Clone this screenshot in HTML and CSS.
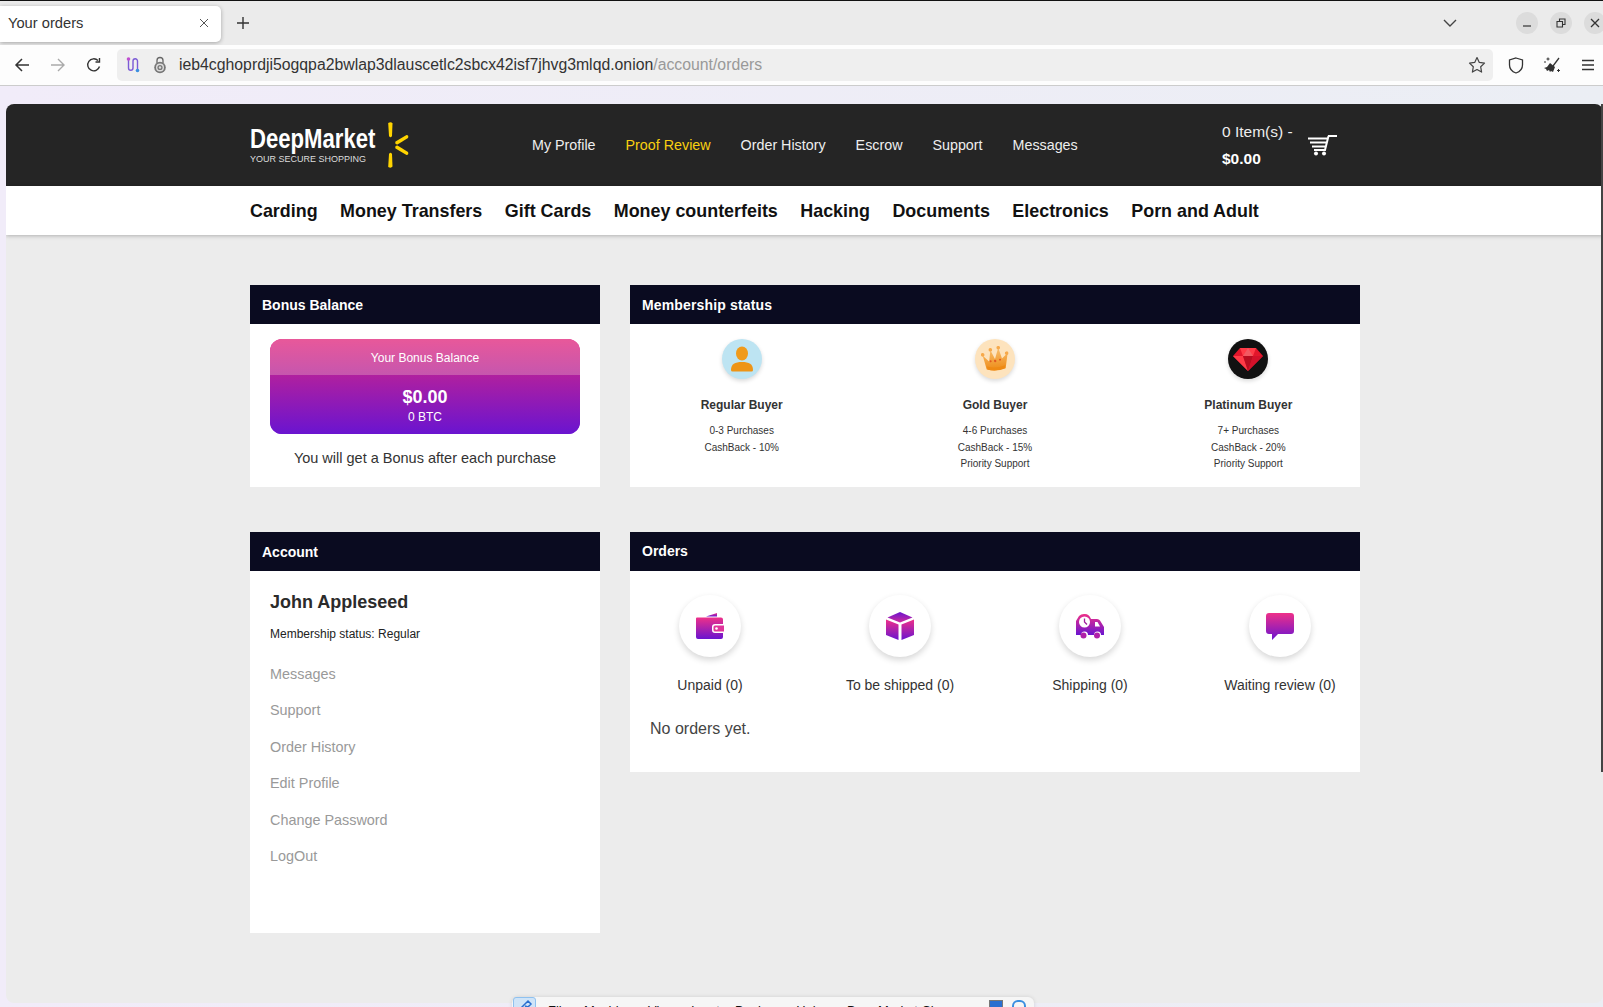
FILE: index.html
```html
<!DOCTYPE html>
<html lang="en">
<head>
<meta charset="utf-8">
<title>Your orders</title>
<link rel="stylesheet" href="styles.css">
</head>
<body>
<div class="tabbar">
  <div class="tab"><span class="tab-title">Your orders</span>
    <svg class="tab-x" width="12" height="12" viewBox="0 0 12 12"><path d="M2 2l8 8M10 2l-8 8" stroke="#555" stroke-width="1" fill="none"/></svg>
  </div>
  <svg class="tab-plus" width="14" height="14" viewBox="0 0 14 14"><path d="M7 1v12M1 7h12" stroke="#333" stroke-width="1.4" fill="none"/></svg>
  <svg class="chevron" width="14" height="9" viewBox="0 0 14 9"><path d="M1 1l6 6 6-6" stroke="#444" stroke-width="1.4" fill="none"/></svg>
  <div class="winbtns">
    <span class="winbtn"><svg width="10" height="10" viewBox="0 0 10 10"><path d="M1 8h8" stroke="#333" stroke-width="1.2"/></svg></span>
    <span class="winbtn"><svg width="10" height="10" viewBox="0 0 10 10"><path d="M1 3.500h5.500v5.500h-5.500zM3.500 3V1H9v5.500H7" stroke="#333" stroke-width="1.1" fill="none"/></svg></span>
    <span class="winbtn"><svg width="10" height="10" viewBox="0 0 10 10"><path d="M1 1l8 8M9 1l-8 8" stroke="#333" stroke-width="1.3"/></svg></span>
  </div>
</div>
<div class="toolbar">
  <span class="tbtn"><svg width="16" height="16" viewBox="0 0 16 16"><path d="M15 8H2M8 2L2 8l6 6" stroke="#333" stroke-width="1.500" fill="none"/></svg></span>
  <span class="tbtn"><svg width="16" height="16" viewBox="0 0 16 16"><path d="M1 8h13M8 2l6 6-6 6" stroke="#aaa" stroke-width="1.400" fill="none"/></svg></span>
  <span class="tbtn"><svg width="16" height="16" viewBox="0 0 16 16"><path d="M13.500 9.500A6 6 0 1 1 12 3.600M13.500 1v4h-4" stroke="#333" stroke-width="1.400" fill="none"/></svg></span>
  <div class="urlbar">
    <svg class="url-tor" width="16" height="18" viewBox="0 0 16 18"><path d="M3.500 3v9a2.200 2.200 0 0 0 4.500 0V5a2.200 2.200 0 0 1 4.500 0v8" stroke="#7b5bd6" stroke-width="1.400" fill="none"/><circle cx="3.500" cy="3" r="1.800" fill="#c04fd0"/><circle cx="12.500" cy="14.500" r="1.800" fill="#3b8fe0"/></svg>
    <svg class="url-lock" width="14" height="18" viewBox="0 0 14 18"><path d="M4 7V4.500a3 3 0 0 1 6 0V7" stroke="#666" stroke-width="1.300" fill="none"/><circle cx="7" cy="11.500" r="5.800" fill="#777"/><circle cx="7" cy="11.500" r="4" fill="#ddd"/><circle cx="7" cy="11.500" r="2.600" fill="#777"/><circle cx="7" cy="11.500" r="1.200" fill="#ddd"/></svg>
    <span class="url-host">ieb4cghoprdji5ogqpa2bwlap3dlauscetlc2sbcx42isf7jhvg3mlqd.onion<span class="url-path">/account/orders</span></span>
    <svg class="url-star" width="18" height="18" viewBox="0 0 18 18"><path d="M9 1.500l2.300 4.900 5.200.7-3.800 3.700.9 5.300L9 13.500l-4.600 2.600.9-5.300L1.500 7.100l5.200-.7z" stroke="#444" stroke-width="1.200" fill="none" stroke-linejoin="round"/></svg>
  </div>
  <span class="tbtn tbtn-first"><svg width="16" height="17" viewBox="0 0 16 17"><path d="M8 1l6.500 2v5c0 4-3 6.800-6.500 8C4.500 14.800 1.500 12 1.500 8V3z" stroke="#333" stroke-width="1.300" fill="none"/></svg></span>
  <span class="tbtn"><svg width="18" height="18" viewBox="0 0 18 18"><path d="M16 2l-6 8" stroke="#333" stroke-width="1.300"/><path d="M7 7l5 4-2 5-2-1-1 1-1-2-2 1-1-2-2-1 3-1z" fill="#333"/><path d="M5 1.500v3M3.500 3h3M15.500 13v3M14 14.500h3M1 6h2" stroke="#333" stroke-width="1"/></svg></span>
  <span class="tbtn tbtn-last"><svg width="14" height="12" viewBox="0 0 14 12"><path d="M1 1.500h12M1 6h12M1 10.500h12" stroke="#333" stroke-width="1.300"/></svg></span>
</div>

<div class="viewport">
  <div class="page">
    <header class="site-head">
      <div class="wrap head-row">
        <a class="logo">
          <span class="logo-text">
            <span class="logo-name">DeepMarket</span>
            <span class="logo-tag">YOUR SECURE SHOPPING</span>
          </span>
          <svg class="logo-spark" width="24" height="46" viewBox="0 0 24 46"><g fill="#ffd400"><path d="M3.200 1q3-1.500 4.300.5L7 14q-1.500 2.500-3 0z"/><path d="M3.200 45q3 1.500 4.300-.5L7 32q-1.500-2.500-3 0z"/><path d="M10.500 19.500l11-6.500q2.500 0 1.500 3l-10.500 6.500q-3 0-2-3z"/><path d="M10.500 26.500l11 6.500q2.500 0 1.500-3l-10.500-6.500q-3 0-2 3z"/></g></svg>
        </a>
        <nav class="top-nav">
          <a>My Profile</a>
          <a class="is-active">Proof Review</a>
          <a>Order History</a>
          <a>Escrow</a>
          <a>Support</a>
          <a>Messages</a>
        </nav>
        <div class="cart">
          <div class="cart-text">
            <span>0 Item(s) -</span>
            <strong>$0.00</strong>
          </div>
          <svg class="cart-icon" width="30" height="22" viewBox="0 0 30 22"><path d="M20 2h9M20.500 2L17 16H6M0 4.500h19M2 8.500h16.500M4 12.500h13.500" stroke="#fff" stroke-width="2" fill="none"/><circle cx="8" cy="19.500" r="2" fill="#fff"/><circle cx="16" cy="19.500" r="2" fill="#fff"/></svg>
        </div>
      </div>
    </header>
    <nav class="cat-nav">
      <div class="wrap cat-row">
        <a>Carding</a><a>Money Transfers</a><a>Gift Cards</a><a>Money counterfeits</a><a>Hacking</a><a>Documents</a><a>Electronics</a><a>Porn and Adult</a>
      </div>
    </nav>

    <main class="wrap dash">
      <section class="panel panel-bonus">
        <h2 class="panel-title">Bonus Balance</h2>
        <div class="bonus-body">
          <div class="bonus-card">
            <div class="bonus-top">Your Bonus Balance</div>
            <div class="bonus-main">
              <strong>$0.00</strong>
              <span>0 BTC</span>
            </div>
          </div>
          <p class="bonus-note">You will get a Bonus after each purchase</p>
        </div>
      </section>

      <section class="panel panel-bonus">
        <h2 class="panel-title panel-title-wide">Membership status</h2>
        <div class="tiers">
          <div class="tier">
            <span class="avatar avatar-blue"><svg width="22" height="26" viewBox="0 0 22 26"><ellipse cx="11" cy="7.500" rx="6" ry="7" fill="#f09a1a"/><path d="M0 24c0-6 4-8 11-8s11 2 11 8q0 1.500-1.500 1.500h-19Q0 25.500 0 24z" fill="#ee9416"/></svg></span>
            <h3>Regular Buyer</h3>
            <p>0-3 Purchases</p><p>CashBack - 10%</p>
          </div>
          <div class="tier">
            <span class="avatar avatar-cream"><svg width="28" height="26" viewBox="0 0 28 26"><defs><linearGradient id="gc" x1="0" y1="0" x2="0" y2="1"><stop offset="0" stop-color="#f8c070"/><stop offset="1" stop-color="#ee8a14"/></linearGradient></defs><g transform="rotate(-4 14 13)"><path d="M5 23L2 9l6 6 2-11 4 9 4-11 3 11 6-5-3 15q-9 3-19 0z" fill="url(#gc)"/><path d="M5.500 20q9 3 18 0l-.5 3q-9 3-17 0z" fill="#ee8a14"/><g fill="#f7a94a"><circle cx="2" cy="8" r="1.800"/><circle cx="10" cy="3.500" r="1.800"/><circle cx="18" cy="2" r="1.800"/><circle cx="26" cy="8" r="1.800"/></g><circle cx="14" cy="15" r="1.200" fill="#e2591f"/><circle cx="9.500" cy="15" r="1" fill="#e2591f"/><circle cx="19" cy="14" r="1" fill="#e2591f"/></g></svg></span>
            <h3>Gold Buyer</h3>
            <p>4-6 Purchases</p><p>CashBack - 15%</p><p>Priority Support</p>
          </div>
          <div class="tier">
            <span class="avatar avatar-black"><svg width="30" height="24" viewBox="0 0 30 24"><path d="M7 1h16l7 8-15 15L0 9z" fill="#e3162b"/><path d="M7 1l3 8h10l3-8zM0 9h10l5 15z" fill="#ff3b47"/><path d="M10 9h10l-5 15z" fill="#b80d20"/><path d="M30 9H20l-5 15z" fill="#d3112a"/><path d="M10 9l5-8 5 8" fill="#f25a62"/></svg></span>
            <h3>Platinum Buyer</h3>
            <p>7+ Purchases</p><p>CashBack - 20%</p><p>Priority Support</p>
          </div>
        </div>
      </section>

      <section class="panel panel-account">
        <h2 class="panel-title">Account</h2>
        <div class="account-body">
          <h3 class="account-name">John Appleseed</h3>
          <p class="account-status">Membership status: Regular</p>
          <ul class="account-links">
            <li>Messages</li><li>Support</li><li>Order History</li><li>Edit Profile</li><li>Change Password</li><li>LogOut</li>
          </ul>
        </div>
      </section>

      <section class="panel panel-orders">
        <h2 class="panel-title panel-title-tight">Orders</h2>
        <div class="orders-body">
          <div class="order-states">
            <div class="state">
              <span class="state-icon"><svg width="28" height="28" viewBox="0 0 28 28"><defs><linearGradient id="gw" x1="0" y1="0" x2="0" y2="1"><stop offset="0" stop-color="#ee3089"/><stop offset="1" stop-color="#6a14d0"/></linearGradient></defs><path d="M10 4.500L21 1v3.500z" fill="url(#gw)"/><path d="M1 5.500h24q2 0 2 2V12h-8a3 3 0 0 0-3 3v3a3 3 0 0 0 3 3h8v4q0 2-2 2H2q-2 0-2-2V6.500q0-1 1-1z" fill="url(#gw)"/><path d="M19 13.500h9v6h-9q-1.500 0-1.500-1.500v-3q0-1.500 1.500-1.500z" fill="#e0359b"/><circle cx="20.500" cy="16.500" r="1.300" fill="#fff"/></svg></span>
              <span class="state-label">Unpaid (0)</span>
            </div>
            <div class="state">
              <span class="state-icon"><svg width="28" height="28" viewBox="0 0 28 28"><defs><linearGradient id="gb" x1="0" y1="0" x2="0" y2="1"><stop offset="0" stop-color="#ee3089"/><stop offset="1" stop-color="#6a14d0"/></linearGradient><linearGradient id="gb2" x1="0" y1="0" x2="0" y2="1"><stop offset="0" stop-color="#6a14d0"/><stop offset="1" stop-color="#d02a9c"/></linearGradient></defs><path d="M14 0l12.500 5.500L14 10.500 1.500 5.500z" fill="url(#gb2)"/><path d="M0 7.500l12.500 5V28L0 23z" fill="url(#gb)"/><path d="M28 7.500l-12.500 5V28L28 23z" fill="url(#gb)"/></svg></span>
              <span class="state-label">To be shipped (0)</span>
            </div>
            <div class="state">
              <span class="state-icon"><svg width="28" height="25" viewBox="0 0 28 25"><defs><linearGradient id="gt" x1="0" y1="0" x2="0" y2="1"><stop offset="0" stop-color="#ee3089"/><stop offset="1" stop-color="#6a14d0"/></linearGradient></defs><path d="M0 21V7l3-5q2-2 5-2h1q4 0 6 5h6q2 0 3 1.500l4 6.500v8h-3a3.500 3.500 0 0 0-7 0h-6a3.500 3.500 0 0 0-7 0z" fill="url(#gt)"/><circle cx="8.500" cy="8" r="5.500" fill="#fff"/><path d="M8.500 4.500V8l2.500 2.500" stroke="#a0209f" stroke-width="1.300" fill="none"/><path d="M19 8h2.500l2.500 4.500h-5z" fill="#fff"/><circle cx="7.500" cy="21.500" r="3" fill="#b020a8"/><circle cx="21" cy="21.500" r="3" fill="#b020a8"/></svg></span>
              <span class="state-label">Shipping (0)</span>
            </div>
            <div class="state">
              <span class="state-icon"><svg width="28" height="27" viewBox="0 0 28 27"><defs><linearGradient id="gm" x1="0" y1="0" x2="0" y2="1"><stop offset="0" stop-color="#ee3089"/><stop offset="1" stop-color="#6a14d0"/></linearGradient></defs><path d="M3 0h22q3 0 3 3v15q0 3-3 3H12l-6 6v-6H3q-3 0-3-3V3q0-3 3-3z" fill="url(#gm)"/></svg></span>
              <span class="state-label">Waiting review (0)</span>
            </div>
          </div>
          <p class="orders-empty">No orders yet.</p>
        </div>
      </section>
    </main>
  </div>
  <span class="page-scrollbar"></span>
</div>

<div class="vm-bar">
  <span class="vm-pin"><svg width="21" height="12" viewBox="0 0 21 12"><path d="M6 11l5-5 3-3 3 3-3 3-3-1" stroke="#2a6fd0" stroke-width="1.500" fill="none"/></svg></span>
  <span class="vm-menu">File</span><span class="vm-menu">Machine</span><span class="vm-menu">View</span><span class="vm-menu">Input</span><span class="vm-menu">Devices</span><span class="vm-menu">Help</span><span class="vm-menu vm-menu-title">DeepMarket Cl</span>
  <span class="vm-icons"><span class="vm-ico vm-ico-a"></span><span class="vm-ico vm-ico-b"></span></span>
</div>
</body>
</html>
```
FILE: styles.css
```css
* { box-sizing: border-box; }
html, body { margin: 0; height: 1007px; overflow: hidden; }
body {
  position: relative;
  display: flex;
  flex-direction: column;
  font-family: "Liberation Sans", Arial, sans-serif;
  background: #ebebeb;
  color: #333;
}
a { color: inherit; text-decoration: none; }
h2, h3, p, ul { margin: 0; padding: 0; }
li { list-style: none; }

/* browser chrome */
.tabbar {
  height: 45px;
  flex: none;
  display: flex;
  align-items: center;
  background: #ebebeb;
  border-top: 1px solid #111;
}
.tab {
  width: 221px;
  height: 36px;
  margin-top: 1px;
  padding: 0 11px 2px 8px;
  display: flex;
  align-items: center;
  justify-content: space-between;
  background: #fff;
  border-radius: 0 5px 5px 0;
  box-shadow: 0 1px 4px rgba(0,0,0,.3);
}
.tab-title { font-size: 14.700px; color: #333; }
.tab-plus { margin-left: 15px; }
.chevron { margin-left: auto; }
.winbtns { display: flex; gap: 12px; margin: 0 -3px 0 59px; }
.winbtn {
  width: 22px; height: 22px;
  border-radius: 50%;
  background: #dcdcdc;
  display: flex; align-items: center; justify-content: center;
}
.toolbar {
  height: 41px;
  flex: none;
  display: flex;
  align-items: center;
  padding: 0 0 0 4px;
  background: #fdfdfd;
  border-bottom: 1px solid #ccc;
}
.tbtn { width: 36px; height: 32px; flex: none; display: flex; align-items: center; justify-content: center; }
.tbtn-first { margin-left: 5px; }
.urlbar {
  width: 1376px;
  height: 32px;
  margin-left: 5px;
  flex: none;
  display: flex;
  align-items: center;
  padding: 0 7px 0 8px;
  background: #efefef;
  border-radius: 5px;
}
.url-lock { margin-left: 12px; }
.url-host { margin-left: 12px; font-size: 15.800px; color: #333; white-space: nowrap; }
.url-path { color: #999; }
.url-star { margin-left: auto; }

/* page */
.viewport {
  flex: 1;
  position: relative;
  padding: 18px 0 4px 6px;
  background: linear-gradient(90deg, #f1ecf9, #ebeef4);
  overflow: hidden;
}
.page {
  width: 1597px;
  height: 100%;
  background: #ececec;
  border-radius: 8px;
  overflow: hidden;
}
.page-scrollbar {
  position: absolute;
  right: 0; top: 18px;
  width: 2px; height: 668px;
  background: #444;
}
.wrap { width: 1110px; margin-left: 244px; }
.site-head { height: 82px; background: #252525; color: #fff; }
.head-row { height: 100%; display: flex; align-items: center; }
.logo { display: flex; align-items: center; width: 282px; flex: none; }
.logo-text { display: flex; flex-direction: column; width: 126px; flex: none; }
.logo-name {
  font-weight: 700;
  font-size: 28px;
  line-height: 28px;
  color: #fff;
  white-space: nowrap;
  transform: scaleX(.79);
  transform-origin: left center;
}
.logo-tag { font-size: 9px; line-height: 12px; color: #ddd; white-space: nowrap; }
.logo-spark { margin-left: 9px; }
.top-nav { display: flex; gap: 30px; font-size: 14.300px; color: #eee; }
.top-nav .is-active { color: #f8cf10; }
.cart { margin-left: auto; margin-right: 22px; display: flex; align-items: center; }
.cart-text { display: flex; flex-direction: column; font-size: 15.500px; line-height: 27px; width: 86px; color: #eee; }
.cart-text strong { color: #fff; }
.cart-icon { display: block; }
.cat-nav { height: 49px; background: #fff; box-shadow: 0 1px 4px rgba(0,0,0,.25); }
.cat-row { height: 100%; padding-top: 2px; display: flex; align-items: center; gap: 22.500px; font-size: 17.900px; font-weight: 700; color: #111; }

.dash {
  padding-top: 50px;
  display: grid;
  grid-template-columns: 350px 730px;
  column-gap: 30px;
  row-gap: 45px;
  align-items: start;
}
.panel { background: #fff; }
.panel-bonus { height: 202px; }
.panel-account { height: 401px; }
.panel-orders { height: 240px; }
.panel-title {
  height: 39px;
  padding-left: 12px;
  background: #0a0b20;
  color: #fff;
  font-size: 14px;
  line-height: 41px;
  font-weight: 700;
}
.panel-title-tight { line-height: 39px; }
.panel-title-wide { letter-spacing: .15px; }

.bonus-body { padding: 15px 20px 0; text-align: center; }
.bonus-card {
  height: 95px;
  border-radius: 12px;
  overflow: hidden;
  color: #fff;
  background: linear-gradient(180deg, #e6248e 0%, #6a14d0 100%);
}
.bonus-top {
  height: 36px;
  line-height: 39px;
  font-size: 12px;
  background: linear-gradient(180deg, #e8589a, #c656ae);
}
.bonus-main {
  height: 59px;
  padding-top: 12px;
  display: flex;
  flex-direction: column;
  background: linear-gradient(180deg, #b0209f, #6a14d0);
}
.bonus-main strong { font-size: 18px; line-height: 20px; }
.bonus-main span { font-size: 12px; line-height: 20px; }
.bonus-note { margin-top: 15px; font-size: 14.500px; line-height: 18px; color: #333; }

.tiers { margin: 0 -15px; padding-top: 15px; display: grid; grid-template-columns: repeat(3, 1fr); }
.tier { text-align: center; }
.avatar {
  width: 40px; height: 40px;
  margin: 0 auto 18px;
  border-radius: 50%;
  display: flex; align-items: center; justify-content: center;
  box-shadow: 0 2px 4px rgba(0,0,0,.15);
}
.avatar-blue { background: #bde4f2; }
.avatar-cream { background: #fde3bd; }
.avatar-black { background: #111; }
.tier h3 { font-size: 12px; line-height: 16px; margin-bottom: 10px; color: #333; }
.tier p { font-size: 10px; line-height: 16.500px; color: #333; }

.account-body { padding: 20px 20px 0; }
.account-name { font-size: 18px; line-height: 22px; color: #2b2b2b; }
.account-status { margin-top: 10px; font-size: 12px; line-height: 22px; color: #222; }
.account-links { margin-top: 11px; }
.account-links li { height: 36.400px; font-size: 14.400px; line-height: 36.400px; color: #999; }

.orders-body { padding: 24px 20px 0; }
.order-states { display: grid; grid-template-columns: repeat(4, 120px); justify-content: space-between; }
.state { display: flex; flex-direction: column; align-items: center; }
.state-icon {
  width: 62px; height: 62px;
  border-radius: 50%;
  background: #fff;
  display: flex; align-items: center; justify-content: center;
  box-shadow: 0 3px 6px rgba(0,0,0,.16);
}
.state-label { margin-top: 19px; font-size: 14px; line-height: 18px; color: #333; white-space: nowrap; }
.orders-empty { margin-top: 25px; font-size: 16px; line-height: 20px; color: #444; }

/* VM menu bar overlapping the bottom edge */
.vm-bar {
  position: absolute;
  left: 512px; top: 997px;
  width: 522px; height: 24px;
  display: flex;
  align-items: flex-start;
  padding-top: 6px;
  background: #f6f6f6;
  border-radius: 6px 6px 0 0;
  box-shadow: 0 0 4px rgba(0,0,0,.12);
  font-size: 13px;
  color: #111;
  white-space: nowrap;
}
.vm-pin {
  position: absolute;
  left: 1px; top: 0;
  width: 23px; height: 24px;
  border: 1px solid #8fc1ef;
  border-radius: 3px;
  background: #cfe4f8;
}
.vm-pin svg { display: block; }
.vm-menu { margin-left: 15px; }
.vm-menu:nth-of-type(2) { margin-left: 36px; }
.vm-menu-title { margin-left: 24px; }
.vm-icons { position: absolute; left: 477px; top: 3px; display: flex; gap: 9px; }
.vm-ico { display: block; width: 14px; height: 14px; }
.vm-ico-a { background: #2a6fd0; border: 1px solid #777; }
.vm-ico-b { border: 2px solid #3b8fe0; border-radius: 6px; }
```
